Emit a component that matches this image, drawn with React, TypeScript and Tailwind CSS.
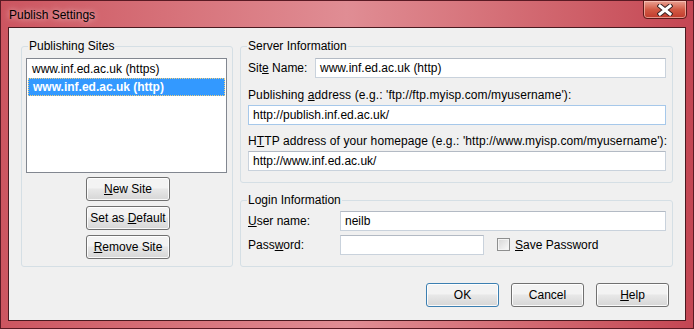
import React from "react";

const font = { fontFamily: "'Liberation Sans', Arial, sans-serif" };

function WinButton({ children, wide = "w-[84px]", primary = false }: { children: React.ReactNode; wide?: string; primary?: boolean }) {
  return (
    <button
      className={`${wide} h-[24px] rounded-[3px] border text-[12px] leading-none text-black bg-gradient-to-b from-[#f3f3f3] from-45% via-[#e8e8e8] via-50% to-[#d6d6d6] shadow-[inset_0_0_0_1px_rgba(255,255,255,0.85)] ${
        primary ? "border-[#3c7fb1] shadow-[inset_0_0_0_1px_#9fd6f5]" : "border-[#707070]"
      }`}
    >
      {children}
    </button>
  );
}

function Field({ value, w = "flex-1", focus = false }: { value: string; w?: string; focus?: boolean }) {
  return (
    <div
      className={`${w} h-[20px] bg-white border flex items-center px-[4px] text-[12px] ${
        focus ? "border-[#a6c8ea]" : "border-[#c9d2dc] border-t-[#b3bac4]"
      }`}
    >
      {value}
    </div>
  );
}

function Group({ title, className, children }: { title: string; className: string; children: React.ReactNode }) {
  return (
    <div className={`relative border border-[#d5dfe5] rounded-[3px] ${className}`}>
      <span className="absolute top-[-8px] left-[6px] px-[1px] bg-[#f0f0f0] leading-[15px] text-[12px]">{title}</span>
      {children}
    </div>
  );
}

export default function App() {
  return (
    <div
      style={font}
      className="w-[694px] h-[329px] flex flex-col px-[7px] pb-[7px] text-black text-[12px] border border-[#5a1a24] bg-gradient-to-r from-[#cc5560] via-[#e08d94] to-[#c44653]"
    >
      {/* title bar */}
      <div className="h-[26px] flex items-start">
        <span className="pl-[1px] pt-[5px] text-[12px] [text-shadow:0_0_6px_rgba(255,235,235,0.9)]">Publish Settings</span>
        <div className="ml-auto mt-[-1px] mr-[-1px] w-[44px] h-[19px] rounded-b-[4px] border border-[#5b1a1a] bg-gradient-to-b from-[#e9a193] via-[#d25a45] to-[#c0392b] shadow-[inset_0_0_0_1px_rgba(255,210,200,0.6)] flex items-center justify-center">
          <svg width="16" height="12" viewBox="0 0 16 12">
            <path d="M3 2 L13 10 M13 2 L3 10" stroke="#3b2324" strokeWidth="5" strokeLinecap="square" />
            <path d="M3 2 L13 10 M13 2 L3 10" stroke="#ffffff" strokeWidth="3" strokeLinecap="square" />
          </svg>
        </div>
      </div>

      {/* client area */}
      <div className="h-[295px] border border-[#4a1a20] bg-[#f0f0f0] flex flex-col">
        <div className="flex pl-[12px] pt-[18px]">
          <Group title="Publishing Sites" className="w-[212px] h-[221px] pt-[11px] px-[4px] flex flex-col items-center">
            <div className="w-[201px] h-[115px] border border-[#828790] bg-white p-[1px] self-start">
              <div className="h-[18px] flex items-center pl-[4px]">www.inf.ed.ac.uk (https)</div>
              <div className="h-[18px] flex items-center pl-[4px] bg-[#3399ff] text-white font-bold border border-dotted border-[#f0d080]">
                www.inf.ed.ac.uk (http)
              </div>
            </div>
            <div className="flex flex-col gap-[5px] mt-[4px] pl-[2px]">
              <WinButton>
                <u>N</u>ew Site
              </WinButton>
              <WinButton>
                Set as <u>D</u>efault
              </WinButton>
              <WinButton>
                <u>R</u>emove Site
              </WinButton>
            </div>
          </Group>

          <div className="ml-[7px] w-[433px] flex flex-col">
            <Group title="Server Information" className="h-[137px] pt-[11px] pl-[7px] pr-[6px]">
              <div className="flex items-center">
                <span className="w-[67px]">
                  Sit<u>e</u> Name:
                </span>
                <Field value="www.inf.ed.ac.uk (http)" />
              </div>
              <div className="mt-[10px] leading-[15px] whitespace-nowrap tracking-[0.1px]">
                Publishing <u>a</u>ddress (e.g.: 'ftp://ftp.myisp.com/myusername'):
              </div>
              <div className="mt-[2px] flex">
                <Field value="http://publish.inf.ed.ac.uk/" focus />
              </div>
              <div className="mt-[9px] leading-[15px] whitespace-nowrap tracking-[0.1px]">
                H<u>T</u>TP address of your homepage (e.g.: 'http://www.myisp.com/myusername'):
              </div>
              <div className="mt-[2px] flex">
                <Field value="http://www.inf.ed.ac.uk/" />
              </div>
            </Group>

            <Group title="Login Information" className="mt-[17px] h-[67px] pt-[10px] pl-[7px] pr-[6px]">
              <div className="flex items-center">
                <span className="w-[92px]">
                  <u>U</u>ser name:
                </span>
                <Field value="neilb" />
              </div>
              <div className="flex items-center mt-[4px]">
                <span className="w-[92px]">
                  Pass<u>w</u>ord:
                </span>
                <Field value="" w="w-[144px]" />
                <div className="ml-[13px] w-[13px] h-[13px] border border-[#8e8f8f] bg-gradient-to-br from-[#d6d6d6] to-[#fbfbfb] shadow-[inset_0_0_0_1px_#f4f4f4]" />
                <span className="ml-[5px]">
                  <u>S</u>ave Password
                </span>
              </div>
            </Group>
          </div>
        </div>

        <div className="flex justify-end gap-[12px] pr-[16px] mt-[16px]">
          <WinButton wide="w-[73px]" primary>
            OK
          </WinButton>
          <WinButton wide="w-[73px]">Cancel</WinButton>
          <WinButton wide="w-[73px]">
            <u>H</u>elp
          </WinButton>
        </div>
      </div>
    </div>
  );
}
